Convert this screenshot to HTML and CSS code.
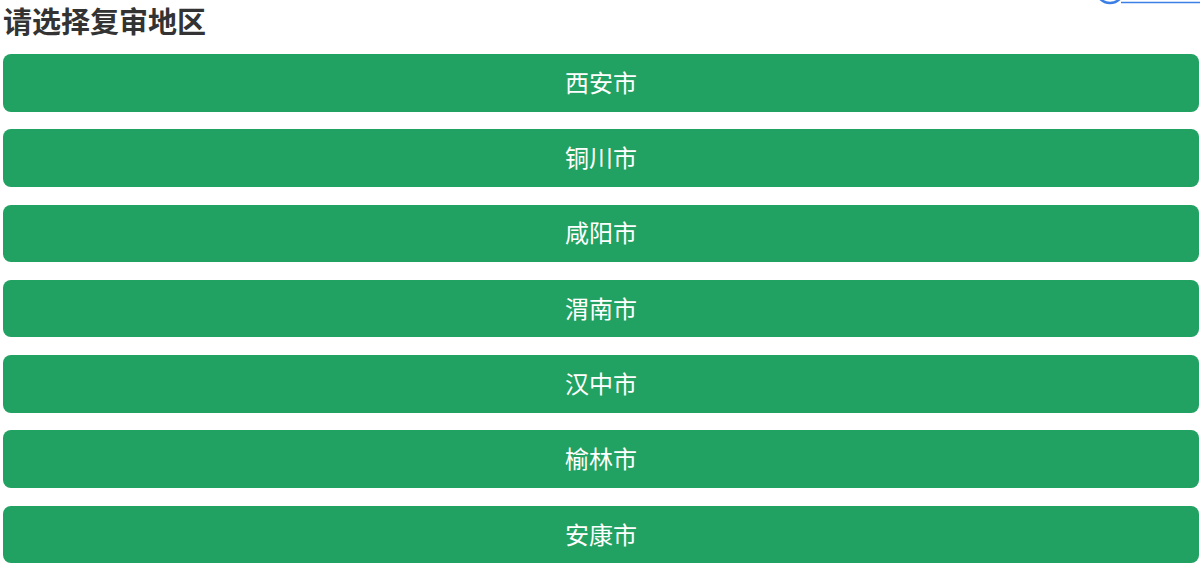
FILE: index.html
```html
<!DOCTYPE html>
<html lang="zh-CN">
<head>
<meta charset="utf-8">
<title>请选择复审地区</title>
<link rel="stylesheet" href="styles.css">
</head>
<body>
<div class="float-tab">
  <svg width="110" height="8" viewBox="0 0 110 8">
    <circle cx="20" cy="-11" r="14" fill="none" stroke="#3b7fe6" stroke-width="2.5"/>
    <line x1="31" y1="2.5" x2="110" y2="2.5" stroke="#3b7fe6" stroke-width="1.5"/>
  </svg>
</div>
<main class="page">
  <h1 class="title">请选择复审地区</h1>
  <div class="list">
    <button class="city">西安市</button>
    <button class="city">铜川市</button>
    <button class="city">咸阳市</button>
    <button class="city">渭南市</button>
    <button class="city">汉中市</button>
    <button class="city">榆林市</button>
    <button class="city">安康市</button>
  </div>
</main>
</body>
</html>
```
FILE: styles.css
```css
html, body {
  margin: 0;
  padding: 0;
  background: #ffffff;
}
body {
  font-family: "Noto Sans CJK SC", "Noto Sans", sans-serif;
}
.page {
  padding: 2px 1px 0 3px;
}
.title {
  margin: 0 0 16px 0;
  font-size: 29px;
  line-height: 36px;
  font-weight: 700;
  color: #333333;
}
.list {
  display: flex;
  flex-direction: column;
  gap: 17.8px;
}
.city {
  display: block;
  width: 100%;
  height: 57.5px;
  border: none;
  border-radius: 8px;
  background: #22a262;
  color: #ffffff;
  font-family: "Noto Sans CJK SC", "Noto Sans", sans-serif;
  font-size: 24px;
  line-height: 1;
  padding: 0 0 2px 0;
  cursor: pointer;
}
.float-tab {
  position: absolute;
  top: 0;
  left: 1090px;
  width: 110px;
  height: 8px;
  line-height: 0;
}
```
